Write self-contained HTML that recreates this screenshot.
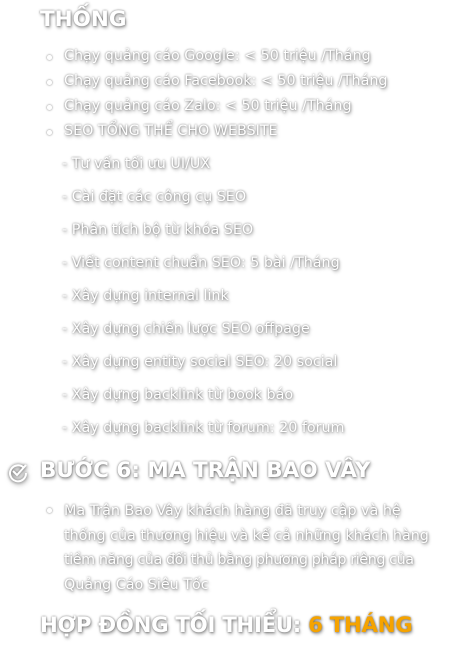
<!DOCTYPE html>
<html><head><meta charset="utf-8"><style>
body{margin:0;width:456px;height:655px;background:#fff;overflow:hidden;font-family:"DejaVu Sans",sans-serif;color:#fff;text-shadow:0 0 2px rgba(0,0,0,.55),1px 2px 3px rgba(0,0,0,.35);}
.a{position:absolute;white-space:nowrap}
.h{font-weight:bold;font-size:21.5px}
.li{font-size:14.3px;left:64px;letter-spacing:0}
.dot{position:absolute;left:47px;width:3px;height:3px;border-radius:50%;border:1px solid #fff;box-shadow:0 0 2px rgba(0,0,0,.6)}
.sub{font-size:14.3px;left:62px;letter-spacing:0}
</style></head><body>
<div class="a h" style="left:40px;top:7px">THỐNG</div>
<div class="dot" style="top:55px"></div><div class="a li" style="top:48px">Chạy quảng cáo Google: &lt; 50 triệu /Tháng</div>
<div class="dot" style="top:80px"></div><div class="a li" style="top:73px">Chạy quảng cáo Facebook: &lt; 50 triệu /Tháng</div>
<div class="dot" style="top:105px"></div><div class="a li" style="top:98px">Chạy quảng cáo Zalo: &lt; 50 triệu /Tháng</div>
<div class="dot" style="top:130px"></div><div class="a li" style="top:123px">SEO TỔNG THỂ CHO WEBSITE</div>
<div class="a sub" style="top:156px">- Tư vấn tối ưu UI/UX</div>
<div class="a sub" style="top:189px">- Cài đặt các công cụ SEO</div>
<div class="a sub" style="top:222px">- Phân tích bộ từ khóa SEO</div>
<div class="a sub" style="top:255px">- Viết content chuẩn SEO: 5 bài /Tháng</div>
<div class="a sub" style="top:288px">- Xây dựng internal link</div>
<div class="a sub" style="top:321px">- Xây dựng chiến lược SEO offpage</div>
<div class="a sub" style="top:354px">- Xây dựng entity social SEO: 20 social</div>
<div class="a sub" style="top:387px">- Xây dựng backlink từ book báo</div>
<div class="a sub" style="top:420px">- Xây dựng backlink từ forum: 20 forum</div>
<svg class="a" style="left:7px;top:461px;filter:drop-shadow(0 0 1.5px rgba(0,0,0,.6)) drop-shadow(1px 2px 2px rgba(0,0,0,.3))" width="22" height="22" viewBox="0 0 22 22"><path d="M17 7A8 8 0 1 0 19 12" fill="none" stroke="#fff" stroke-width="2"/><path d="M6 10l4 4 9-10" fill="none" stroke="#fff" stroke-width="2"/></svg>
<div class="a h" style="left:40px;top:458px">BƯỚC 6: MA TRẬN BAO VÂY</div>
<div class="dot" style="top:508px"></div>
<div class="a" style="left:64px;top:499px;font-size:14.3px;line-height:24.5px">Ma Trận Bao Vây khách hàng đã truy cập và hệ<br>thống của thương hiệu và kể cả những khách hàng<br><span style="letter-spacing:-0.4px">tiềm năng của đối thủ bằng phương pháp riêng của</span><br>Quảng Cáo Siêu Tốc</div>
<div class="a h" style="left:40px;top:613px;font-size:21.3px;letter-spacing:-0.3px">HỢP ĐỒNG TỐI THIỂU: <span style="color:#f5a300">6 THÁNG</span></div>
</body></html>
